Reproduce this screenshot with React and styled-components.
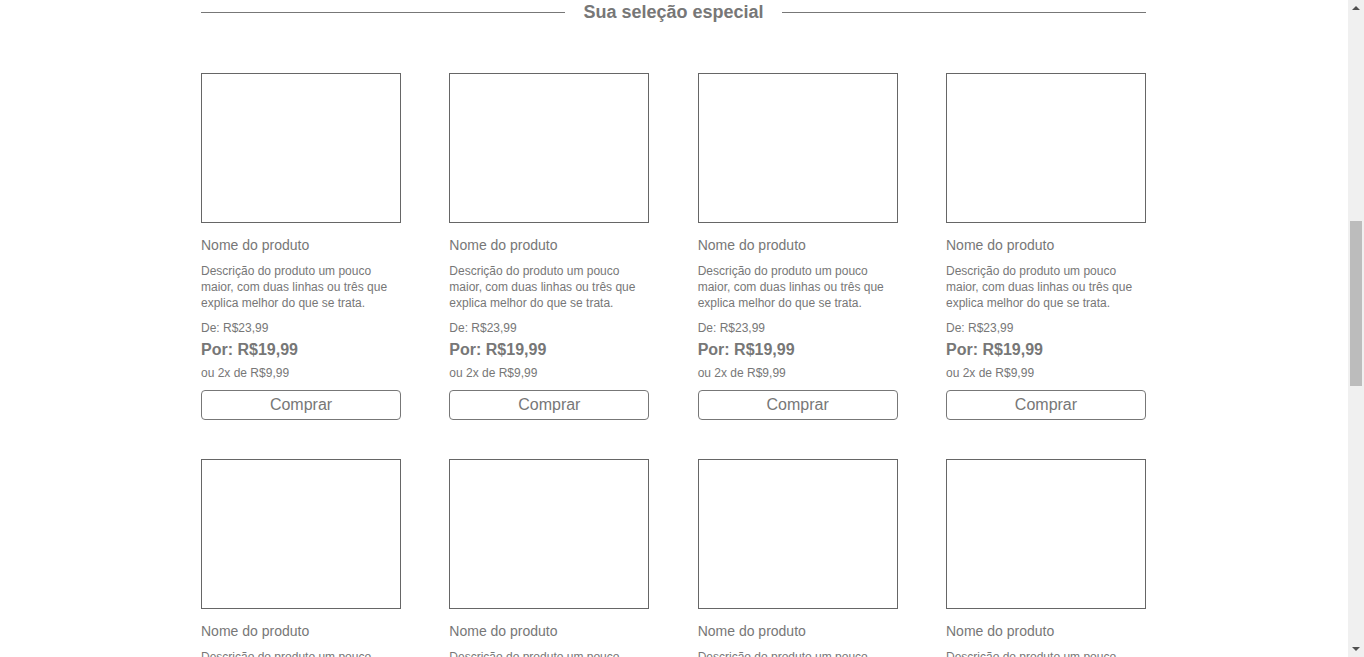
import React from "react";
import styled, { createGlobalStyle } from "styled-components";

const GlobalStyle = createGlobalStyle`
  body {
    margin: 0;
    background: #fff;
    font-family: "Liberation Sans", Arial, sans-serif;
    color: #777;
  }
`;

const products = Array.from({ length: 12 }, (_, i) => ({
  id: i,
  name: "Nome do produto",
  description:
    "Descrição do produto um pouco maior, com duas linhas ou três que explica melhor do que se trata.",
  oldPrice: "R$23,99",
  price: "R$19,99",
  installments: "ou 2x de R$9,99",
}));

const Product = ({ product }) => (
  <Card>
    <ImageBox />
    <Name>{product.name}</Name>
    <Description>{product.description}</Description>
    <OldPrice>De: {product.oldPrice}</OldPrice>
    <Price>Por: {product.price}</Price>
    <Installments>{product.installments}</Installments>
    <BuyButton type="button">Comprar</BuyButton>
  </Card>
);

const App = () => (
  <>
    <GlobalStyle />
    <Page>
      <Section>
        <Heading>
          <Line />
          <HeadingText>Sua seleção especial</HeadingText>
          <Line />
        </Heading>
        <Grid>
          {products.map(p => (
            <Product key={p.id} product={p} />
          ))}
        </Grid>
      </Section>
    </Page>
    <ScrollTrack>
      <Arrow up />
      <Thumb />
      <Arrow />
    </ScrollTrack>
  </>
);

export default App;

const Page = styled.main`
  margin-right: 17px;
`;

const Section = styled.section`
  width: 945px;
  margin: 0 auto;
  padding-bottom: 60px;
`;

const Heading = styled.div`
  display: flex;
  align-items: center;
  gap: 18px;
  height: 24px;
`;

const Line = styled.div`
  flex: 1;
  border-top: 1px solid #777;
`;

const HeadingText = styled.h2`
  margin: 0;
  font-size: 18px;
  font-weight: 700;
  color: #777;
  white-space: nowrap;
`;

const Grid = styled.div`
  display: grid;
  grid-template-columns: repeat(4, 200px);
  justify-content: space-between;
  row-gap: 39px;
  margin-top: 49px;
`;

const Card = styled.div`
  display: flex;
  flex-direction: column;
  width: 200px;
`;

const ImageBox = styled.div`
  box-sizing: border-box;
  width: 200px;
  height: 150px;
  border: 1px solid #666;
`;

const Name = styled.div`
  margin-top: 14px;
  font-size: 14px;
  line-height: 16px;
`;

const Description = styled.p`
  margin: 10px 0 0;
  font-size: 12px;
  line-height: 16px;
`;

const OldPrice = styled.div`
  margin-top: 9px;
  font-size: 12px;
  line-height: 16px;
`;

const Price = styled.div`
  margin-top: 4px;
  font-size: 16px;
  font-weight: 700;
  line-height: 20px;
`;

const Installments = styled.div`
  margin-top: 5px;
  font-size: 12px;
  line-height: 16px;
`;

const BuyButton = styled.button`
  margin-top: 9px;
  height: 30px;
  width: 100%;
  background: #fff;
  border: 1px solid #777;
  border-radius: 4px;
  font-family: "Liberation Sans", Arial, sans-serif;
  font-size: 16px;
  color: #777;
  cursor: pointer;
`;

/* fake browser scrollbar, fixed over the right edge */
const ScrollTrack = styled.div`
  position: fixed;
  top: 0;
  right: 0;
  width: 16px;
  height: 100vh;
  background: #f0f0f0;
`;

const Thumb = styled.div`
  position: absolute;
  top: 221px;
  left: 2px;
  width: 12px;
  height: 165px;
  background: #bcbcbc;
`;

const Arrow = styled.div`
  position: absolute;
  ${props => (props.up ? "top: 6px;" : "bottom: 6px;")}
  left: 4px;
  width: 0;
  height: 0;
  border-left: 4px solid transparent;
  border-right: 4px solid transparent;
  ${props =>
    props.up
      ? "border-bottom: 4px solid #505050;"
      : "border-top: 4px solid #505050;"}
`;
